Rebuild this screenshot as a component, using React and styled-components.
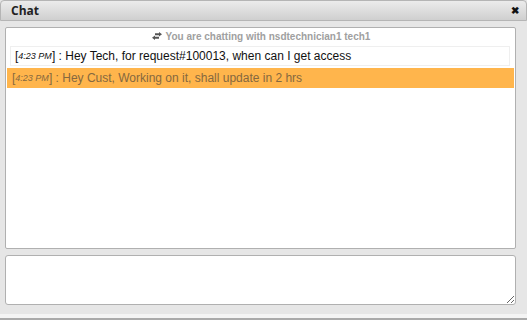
import React from 'react';
import styled, { createGlobalStyle } from 'styled-components';

const GlobalStyle = createGlobalStyle`
    html, body {
        margin: 0;
        padding: 0;
        background: #e6e6e6;
        width: 527px;
        height: 320px;
        overflow: hidden;
    }
`;

const messages = [
    { time: '4:23 PM', text: 'Hey Tech, for request#100013, when can I get access', mine: true },
    { time: '4:23 PM', text: 'Hey Cust, Working on it, shall update in 2 hrs', mine: false },
];

function SwapIcon() {
    return (
        <svg width="12" height="8" viewBox="0 0 12 8">
            <path d="M4 1.2 L8 1.2 L8 0 L11 2.2 L8 4.4 L8 3.2 L4 3.2 Z" fill="#555" />
            <path d="M8 4.8 L4 4.8 L4 3.6 L1 5.8 L4 8 L4 6.8 L8 6.8 Z" fill="#555" />
        </svg>
    );
}

function Chat() {
    return (
        <SCDialog>
            <SCTitleBar>
                <SCTitle>Chat</SCTitle>
                <SCClose>✖</SCClose>
            </SCTitleBar>
            <SCBody>
                <SCLog>
                    <SCInfo><SwapIcon /> You are chatting with nsdtechnician1 tech1</SCInfo>
                    {messages.map((m, i) => (
                        <SCMessage key={i} mine={m.mine}>
                            [<SCTime>{m.time}</SCTime>] : {m.text}
                        </SCMessage>
                    ))}
                </SCLog>
                <SCInput />
            </SCBody>
            <SCFooter />
        </SCDialog>
    );
}

export default function App() {
    return (
        <>
            <GlobalStyle />
            <Chat />
        </>
    );
}

const SCDialog = styled.div`
    width: 527px;
    height: 320px;
    display: flex;
    flex-direction: column;
    background: #e6e6e6;
    font-family: 'Liberation Sans', Arial, sans-serif;
`;

const SCTitleBar = styled.div`
    height: 19px;
    display: flex;
    align-items: center;
    justify-content: space-between;
    padding: 0 7px 0 10px;
    background: linear-gradient(#ececec, #cfcfcf);
    border: 1px solid #b5b5b5;
    border-radius: 4px 4px 0 0;
    box-sizing: content-box;
`;

const SCTitle = styled.span`
    font-family: 'Open Sans', sans-serif;
    font-weight: 700;
    font-size: 12px;
    color: #222;
`;

const SCClose = styled.span`
    font-size: 10px;
    color: #111;
    font-weight: 700;
`;

const SCBody = styled.div`
    display: flex;
    flex-direction: column;
    gap: 6px;
    padding: 6px 11px 0 5px;
`;

const SCLog = styled.div`
    height: 220px;
    background: #fff;
    border: 1px solid #b0b0b0;
    border-radius: 2px;
    display: flex;
    flex-direction: column;
    gap: 2px;
    padding: 0 1px;
`;

const SCInfo = styled.div`
    height: 16px;
    display: flex;
    align-items: center;
    justify-content: center;
    gap: 3px;
    font-size: 10px;
    font-weight: 700;
    color: #a0a0a0;
`;

const SCMessage = styled.div`
    height: 18px;
    display: flex;
    align-items: center;
    white-space: pre;
    font-size: 12px;
    color: ${p => (p.mine ? '#111' : '#85683f')};
    background: ${p => (p.mine ? '#fff' : '#ffb54c')};
    border: 1px solid ${p => (p.mine ? '#efefef' : '#ffb54c')};
    margin: ${p => (p.mine ? '0 4px 0 3px' : '0')};
    padding: 0 0 0 4px;
`;

const SCTime = styled.i`
    font-size: 9px;
`;

const SCInput = styled.textarea`
    height: 48px;
    resize: both;
    border: 1px solid #b0b0b0;
    border-radius: 3px;
    background: #fff;
    outline: none;
    box-sizing: content-box;
    padding: 0;
`;

const SCFooter = styled.div`
    margin-top: auto;
    height: 4px;
    background: #f4f4f4;
    border-bottom: 2px solid #aaa;
`;
